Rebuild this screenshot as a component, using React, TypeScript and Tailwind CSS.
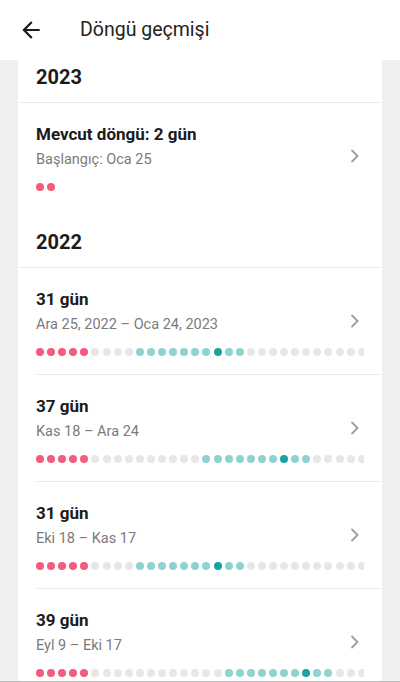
import React from "react";

type Cycle = {
  title: string;
  dates: string;
  // counts: pink, gray, teal, dark, teal, gray
  pattern: number[];
};

const cycles: Cycle[] = [
  { title: "31 gün", dates: "Ara 25, 2022 – Oca 24, 2023", pattern: [5, 4, 7, 1, 2, 12] },
  { title: "37 gün", dates: "Kas 18 – Ara 24", pattern: [5, 10, 7, 1, 2, 12] },
  { title: "31 gün", dates: "Eki 18 – Kas 17", pattern: [5, 4, 7, 1, 2, 12] },
  { title: "39 gün", dates: "Eyl 9 – Eki 17", pattern: [5, 12, 7, 1, 2, 12] },
];

const dotColors = ["bg-[#f35b7f]", "bg-[#e7e7e7]", "bg-[#8fd3d1]", "bg-[#17a2a3]", "bg-[#8fd3d1]", "bg-[#e7e7e7]"];

function Dots({ pattern }: { pattern: number[] }) {
  const dots: string[] = [];
  pattern.forEach((n, i) => {
    for (let k = 0; k < n; k++) dots.push(dotColors[i]);
  });
  return (
    <div className="flex gap-[3.1px] overflow-hidden mt-[13px]">
      {dots.map((c, i) => (
        <span key={i} className={`shrink-0 w-[8px] h-[8px] rounded-full ${c}`} />
      ))}
    </div>
  );
}

function Chevron() {
  return (
    <svg width="10" height="14" viewBox="0 0 10 14" className="absolute right-[22px] top-[46px]">
      <polyline points="2,1.5 7.5,7 2,12.5" fill="none" stroke="#9e9e9e" strokeWidth="1.8" strokeLinecap="round" strokeLinejoin="round" />
    </svg>
  );
}

function Row({ title, dates, pattern, divider }: { title: string; dates: string; pattern: number[]; divider?: boolean }) {
  return (
    <div className="relative">
      <div className={`${divider ? "h-[106px]" : "h-[107px]"} px-[18px] pt-[20px]`}>
        <div className="text-[17px] leading-[22px] font-bold text-[#1b1b1b]">{title}</div>
        <div className="mt-[5px] text-[14.5px] leading-[20px] text-[#7b7b7b]">{dates}</div>
        <Dots pattern={pattern} />
      </div>
      <Chevron />
      {divider && <div className="ml-[18px] h-px bg-[#ececec]" />}
    </div>
  );
}

function YearHeader({ year }: { year: string }) {
  return (
    <div className="h-[58px] px-[18px] pt-[19px] border-b border-[#ececec]">
      <div className="text-[20px] leading-[26px] font-bold text-[#1b1b1b]">{year}</div>
    </div>
  );
}

export default function App() {
  return (
    <div className="h-[682px] w-[400px] flex flex-col bg-[#efefef] overflow-hidden" style={{ fontFamily: "Roboto, 'Noto Sans', sans-serif" }}>
      <header className="h-[60px] shrink-0 bg-white flex items-center">
        <svg width="26" height="26" viewBox="0 0 24 24" className="ml-[18px]">
          <path d="M20 11H7.83l5.59-5.59L12 4l-8 8 8 8 1.41-1.41L7.83 13H20v-2z" fill="#1b1b1b" />
        </svg>
        <h1 className="ml-[36px] text-[19.5px] text-[#222]">Döngü geçmişi</h1>
      </header>
      <main className="flex-1 overflow-hidden">
        <div className="mx-[18px] -mt-[15px] bg-white">
          <YearHeader year="2023" />
          <Row title="Mevcut döngü: 2 gün" dates="Başlangıç: Oca 25" pattern={[2]} />
          <YearHeader year="2022" />
          {cycles.map((c, i) => (
            <Row key={i} title={c.title} dates={c.dates} pattern={c.pattern} divider={i < cycles.length - 1} />
          ))}
        </div>
      </main>
      <div className="h-px shrink-0 bg-[#bdbdbd]" />
    </div>
  );
}
